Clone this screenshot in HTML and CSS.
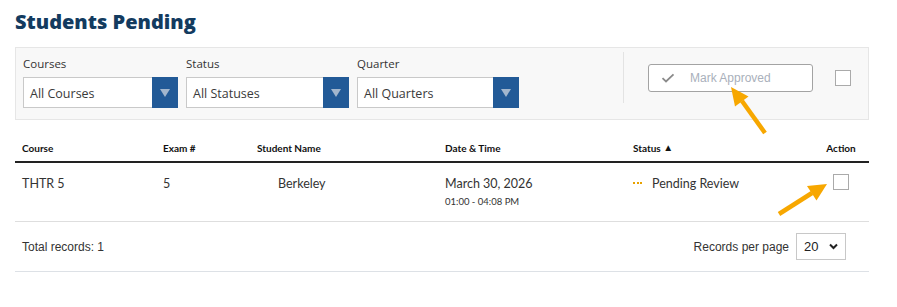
FILE: index.html
```html
<!DOCTYPE html>
<html lang="en">
<head>
    <meta charset="UTF-8">
    <title>Students Pending</title>
    <link rel="stylesheet" href="styles.css">
</head>
<body>
    <div class="page">
        <h1>Students Pending</h1>

        <div class="filters">
            <div class="filter filter-courses">
                <label>Courses</label>
                <div class="select">
                    <span class="select-value">All Courses</span>
                    <span class="select-arrow"></span>
                </div>
            </div>
            <div class="filter filter-status">
                <label>Status</label>
                <div class="select">
                    <span class="select-value">All Statuses</span>
                    <span class="select-arrow"></span>
                </div>
            </div>
            <div class="filter filter-quarter">
                <label>Quarter</label>
                <div class="select">
                    <span class="select-value">All Quarters</span>
                    <span class="select-arrow"></span>
                </div>
            </div>

            <div class="bulk">
                <div class="divider"></div>
                <button class="approve-btn" type="button">
                    <svg width="14" height="10" viewBox="0 0 14 10"><path d="M1.5 5.2 L5 8.4 L12.5 1.4" fill="none" stroke="#8a8a8a" stroke-width="1.8"/></svg>
                    <span>Mark Approved</span>
                </button>
                <span class="checkbox"></span>
            </div>
        </div>

        <table class="students">
            <thead>
                <tr>
                    <th class="col-course">Course</th>
                    <th class="col-exam">Exam #</th>
                    <th class="col-name">Student Name</th>
                    <th class="col-date">Date &amp; Time</th>
                    <th class="col-status">Status <span class="sort">&#9650;</span></th>
                    <th class="col-action">Action</th>
                </tr>
            </thead>
            <tbody>
                <tr>
                    <td>THTR 5</td>
                    <td>5</td>
                    <td class="name">Berkeley</td>
                    <td>
                        March 30, 2026
                        <div class="time">01:00 - 04:08 PM</div>
                    </td>
                    <td><span class="dots"><i></i><i></i><i></i></span>Pending Review</td>
                    <td class="action"><span class="checkbox"></span></td>
                </tr>
            </tbody>
        </table>

        <div class="table-footer">
            <span>Total records: 1</span>
            <div class="per-page">
                <span>Records per page</span>
                <div class="per-page-select">
                    <span>20</span>
                    <svg width="9" height="7" viewBox="0 0 9 7"><path d="M1 1.5 L4.5 5 L8 1.5" fill="none" stroke="#222" stroke-width="2"/></svg>
                </div>
            </div>
        </div>
    </div>

    <!-- callout arrows drawn over the screenshot -->
    <svg class="callouts" width="897" height="307" viewBox="0 0 897 307">
        <line x1="765" y1="133" x2="742" y2="101" stroke="#f7a700" stroke-width="4.5"/>
        <polygon points="731,87 748.5,96.5 735,106.5" fill="#f7a700"/>
        <line x1="779" y1="214" x2="812" y2="193" stroke="#f7a700" stroke-width="4.5"/>
        <polygon points="827,184 816.5,200.5 807,186" fill="#f7a700"/>
    </svg>
</body>
</html>
```

FILE: styles.css
```css
body {
    margin: 0;
    font-family: "Open Sans", Arial, sans-serif;
    color: #333;
    background: #fff;
}
.page {
    width: 854px;
    padding: 8px 15px 0;
}
h1 {
    margin: 0 0 11px;
    font-family: "Open Sans", sans-serif;
    font-weight: 800;
    font-size: 20px;
    line-height: 28px;
    color: #133b5f;
}
.filters {
    display: flex;
    align-items: flex-start;
    height: 73px;
    box-sizing: border-box;
    padding: 8px 17px 0 7px;
    background: #f8f8f8;
    border: 1px solid #e6e6e6;
}
.filter {
    margin-right: 8px;
}
.filter label {
    display: block;
    font-size: 11.5px;
    line-height: 16px;
    margin-bottom: 5px;
    color: #333;
}
.filter-courses .select { width: 155px; }
.filter-status .select { width: 163px; }
.filter-quarter .select { width: 162px; }
.select {
    display: flex;
    height: 31px;
    box-sizing: border-box;
    border: 1px solid #c9c9c9;
    background: #fff;
}
.select-value {
    flex: 1;
    padding-left: 6px;
    font-size: 12.5px;
    line-height: 31px;
    color: #3a3a3a;
}
.select-arrow {
    width: 26px;
    margin: -1px -1px -1px 0;
    background: #225a97;
    display: flex;
    align-items: center;
    justify-content: center;
}
.select-arrow::after {
    content: "";
    border-left: 5.5px solid transparent;
    border-right: 5.5px solid transparent;
    border-top: 8px solid #a2b6cd;
}
.bulk {
    margin-left: auto;
    margin-top: -4px;
    display: flex;
    align-items: center;
}
.divider {
    width: 1px;
    height: 51px;
    background: #e3e3e3;
    margin-right: 24px;
}
.approve-btn {
    display: flex;
    align-items: center;
    width: 165px;
    height: 28px;
    padding: 0 0 0 12px;
    border: 1px solid #a3a3a3;
    border-radius: 3px;
    background: #fff;
    font-family: "Liberation Sans", Arial, sans-serif;
    font-size: 12px;
    color: #a9b0bb;
    margin-right: 22px;
}
.approve-btn svg {
    margin-right: 15px;
}
.checkbox {
    display: inline-block;
    width: 16px;
    height: 16px;
    box-sizing: border-box;
    border: 1px solid #aaa;
    background: #fff;
}
.students {
    width: 854px;
    margin-top: 15px;
    border-collapse: collapse;
    table-layout: fixed;
    font-family: Lato, sans-serif;
}
.students th {
    padding: 6px 7px;
    font-size: 10px;
    line-height: 14px;
    font-weight: 700;
    color: #111;
    text-align: left;
    border-bottom: 2px solid #222;
}
.col-course { width: 127px; }
.col-exam { width: 80px; }
.col-name { width: 174px; }
.col-date { width: 174px; }
.col-status { width: 160px; }
.students th.col-action,
.students td.action {
    text-align: center;
    padding-left: 17px;
    padding-right: 4px;
}
.sort {
    font-size: 10px;
    position: relative;
    top: -1px;
}
.students td {
    padding: 13px 7px 12px;
    font-size: 12.5px;
    line-height: 16px;
    color: #333;
    vertical-align: top;
    border-bottom: 1px solid #dedede;
}
.students td.name {
    padding-left: 28px;
}
.students td.action {
    padding-top: 11px;
}
.time {
    margin-top: 3px;
    font-size: 9.5px;
    line-height: 14px;
}
.dots {
    display: inline-flex;
    gap: 1.5px;
    margin-right: 10px;
    vertical-align: middle;
    position: relative;
    top: -2px;
}
.dots i {
    width: 2px;
    height: 2px;
    background: #e8a200;
}
.table-footer {
    display: flex;
    align-items: center;
    justify-content: space-between;
    height: 49px;
    padding: 0 23px 0 7px;
    border-bottom: 1px solid #dde1e6;
    font-family: "Liberation Sans", Arial, sans-serif;
    font-size: 12px;
    color: #333;
}
.per-page {
    display: flex;
    align-items: center;
}
.per-page-select {
    display: flex;
    align-items: center;
    justify-content: space-between;
    width: 50px;
    height: 27px;
    box-sizing: border-box;
    margin-left: 7px;
    padding: 0 7px 0 7px;
    border: 1px solid #c8c8c8;
    font-size: 13px;
    color: #222;
}
.callouts {
    position: absolute;
    left: 0;
    top: 0;
    pointer-events: none;
}
```
